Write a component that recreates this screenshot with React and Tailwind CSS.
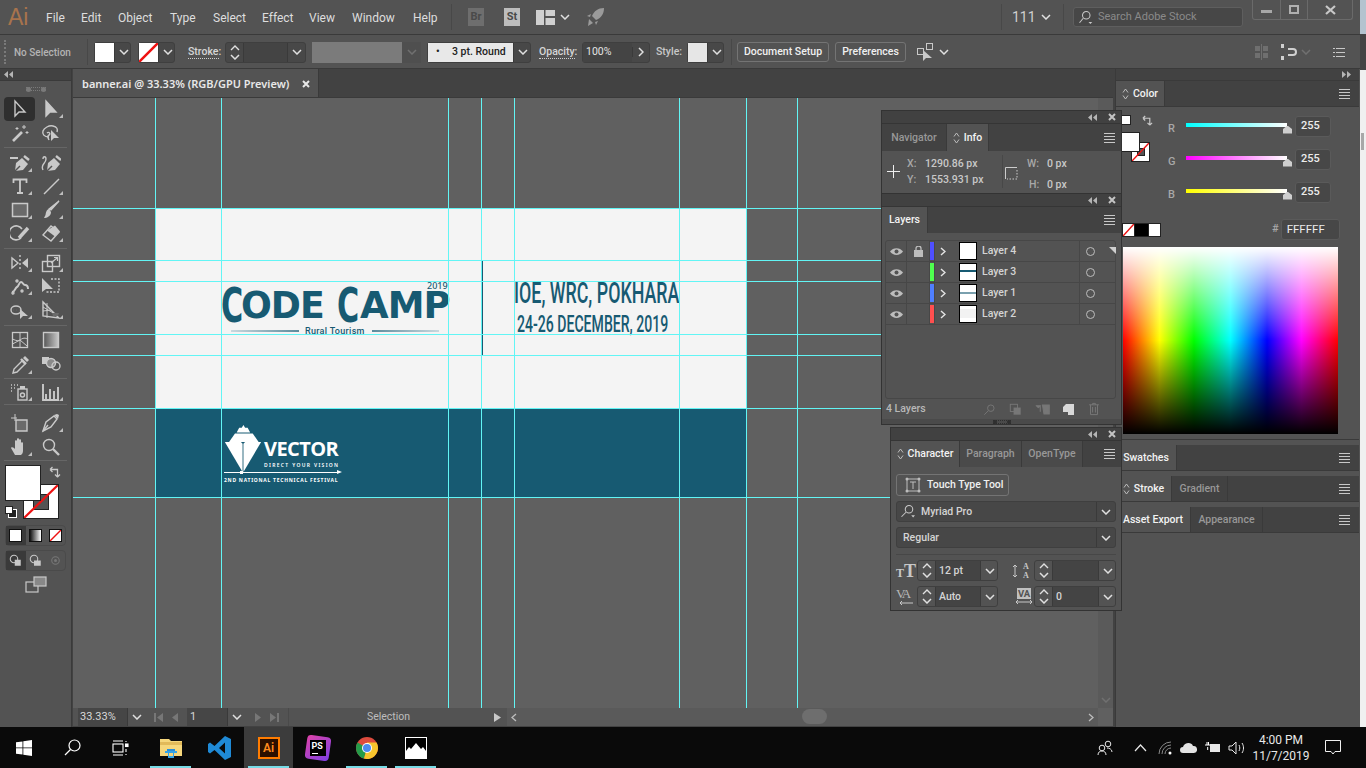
import React from 'react';

const ICON = '#c9c9c9';

const I = ({ children, size = 20, className = '' }) => (
    <svg width={size} height={size} viewBox="0 0 20 20" fill="none" stroke={ICON} strokeWidth="1.4" className={`shrink-0 ${className}`}>
        {children}
    </svg>
);

const Chev = ({ dim = false }) => (
    <svg width="10" height="6" viewBox="0 0 10 6" fill="none" stroke={dim ? '#707070' : '#e0e0e0'} strokeWidth="1.5"><path d="M1 1l4 4 4-4" /></svg>
);

const ChevBox = ({ w = 'w-[18px]', dim = false }) => (
    <div className={`${w} h-full shrink-0 flex items-center justify-center border-l border-[#3a3a3a]`}><Chev dim={dim} /></div>
);

const Spin = () => (
    <div className="w-[18px] h-full shrink-0 flex flex-col items-center justify-center gap-[3px] border-r border-[#3a3a3a]">
        <svg width="10" height="6" viewBox="0 0 10 6" fill="none" stroke="#e0e0e0" strokeWidth="1.4"><path d="M1 5l4-4 4 4" /></svg>
        <Chev />
    </div>
);

const Burger = () => (
    <div className="flex flex-col gap-[2px] w-[11px] shrink-0">
        <div className="h-px bg-[#c8c8c8]" /><div className="h-px bg-[#c8c8c8]" /><div className="h-px bg-[#c8c8c8]" /><div className="h-px bg-[#c8c8c8]" />
    </div>
);

const Updown = () => (
    <svg width="7" height="12" viewBox="0 0 7 12" fill="none" stroke="#bdbdbd" strokeWidth="1" className="shrink-0"><path d="M1 4.500L3.500 1 6 4.500M1 7.500L3.500 11 6 7.500" /></svg>
);

const Arrows2 = ({ right = false }) => (
    <svg width="9" height="7" viewBox="0 0 9 7" fill="#b5b5b5" className="shrink-0">
        {right ? <path d="M0 0l4 3.500L0 7zM5 0l4 3.500L5 7z" /> : <path d="M4 0L0 3.500 4 7zM9 0L5 3.500 9 7z" />}
    </svg>
);

const Close = () => (
    <svg width="8" height="8" viewBox="0 0 8 8" stroke="#c4c4c4" strokeWidth="2"><path d="M1 1l6 6M7 1L1 7" /></svg>
);

const Slash = ({ className = '' }) => (
    <svg viewBox="0 0 20 20" className={`block w-full h-full ${className}`} preserveAspectRatio="none"><rect width="20" height="20" fill="#fff" /><path d="M0 20L20 0" stroke="#ee1111" strokeWidth="2.6" /></svg>
);

const tools = {
    select: <path d="M5 2v15l4-4h6z" />,
    direct: <path d="M5 2v15l4-4h6z" fill={ICON} />,
    wand: <><path d="M3 18l9-9" strokeWidth="2.6" /><path d="M14 2v4M12 4h4M7 4v3M5.500 5.500h3M17 8v3M15.500 9.500h3" strokeWidth="1" /></>,
    lasso: <><path d="M8 14C3 14 1 11 2 8s6-6 10-5 5 3 4 6" /><path d="M6 10c2-2 4 1 2 2-2 1-1 3 0 5" /><path d="M10 7v11l3-3h5z" fill={ICON} stroke="none" /></>,
    pen: <><path d="M0 5h8" strokeWidth="2" /><path d="M5 18l1-8 6-5 6 6-5 6z" fill={ICON} stroke="none" /><path d="M14 3l5 4" strokeWidth="2.400" /><path d="M5 18l5-5" stroke="#535353" /></>,
    curve: <><path d="M2 17C-1 11 5 11 5 6c0-3-3-3-3 0" /><path d="M6 18l1-8 6-5 6 6-5 6z" fill={ICON} stroke="none" /><path d="M15 3l5 4" strokeWidth="2.400" /><path d="M6 18l5-5" stroke="#535353" /></>,
    type: <path d="M3.500 7V3.500h13V7M10 3.500V17M7 17h6" strokeWidth="1.800" />,
    line: <path d="M3 18L18 3" />,
    rect: <rect x="2.500" y="3.500" width="15" height="13" fill="#6a6a6a" strokeWidth="1.500" />,
    brush: <><path d="M18 1l-8 9-2-1z" fill={ICON} /><path d="M8 9c-3 1-3 4-3.500 6L3 18c3 0 7-2 7-6z" fill={ICON} stroke="none" /></>,
    shaper: <><path d="M11 15a7 7 0 1 1 1-9" strokeWidth="1.600" /><path d="M9 15L18 5" strokeWidth="3.400" /></>,
    eraser: <><path d="M2 12l8-9 8 6-8 9z" /><path d="M6 7.500l8-5 5 6-5 5z" fill={ICON} stroke="none" /></>,
    reflect: <><path d="M2 5v10l6-5z" /><path d="M10 2v16" strokeDasharray="2 2" /><path d="M18 5v10l-6-5z" fill={ICON} stroke="none" /></>,
    scale: <><rect x="1.500" y="8.500" width="10" height="10" /><rect x="6.500" y="2.500" width="12" height="11" /><path d="M10 10l6-5M13 4.500h3.500V8" strokeWidth="1.200" /></>,
    puppet: <><path d="M2 16c3 0 3-4 5-5s2-5 4-5 2 3 4 3 3 2 3 4" strokeWidth="2" /><circle cx="7" cy="5" r="1" /><circle cx="3" cy="17" r="1" /><circle cx="12" cy="15" r="1" /></>,
    free: <><path d="M1 2v14l4-3h7z" fill={ICON} stroke="none" /><path d="M10 3h8v13H5" strokeDasharray="2 1.500" /></>,
    builder: <><ellipse cx="6" cy="10" rx="5" ry="4" /><path d="M10 9v10l3-3h5z" fill={ICON} stroke="none" /><path d="M3 10h.1M6 10h.1M9 10h.1" /></>,
    persp: <><path d="M2 2v14l16 2-8-8z" /><path d="M2 7l12 7M2 11l8-1M6 3v15" strokeWidth="1" /><path d="M11 13h7l-1 3h-5z" fill="#6b6b6b" stroke="none" /></>,
    mesh: <><rect x="2.500" y="2.500" width="15" height="15" strokeWidth="1.300" /><path d="M10 2.500v15M2.500 9c4 2 6 2 7.500 1s4-3 7.500-1M2.500 14l7.500-4 7 6" strokeWidth="1" /></>,
    gradient: <><defs><linearGradient id="tg"><stop offset="0" stopColor="#555" /><stop offset="1" stopColor="#c8c8c8" /></linearGradient></defs><rect x="2.500" y="2.500" width="15" height="15" fill="url(#tg)" /></>,
    dropper: <><path d="M3 18l1-4 8-8 3 3-8 8z" /><path d="M11 4l5 5" strokeWidth="2.400" /><path d="M13 3l2-2 4 4-2 2z" fill={ICON} stroke="none" /></>,
    blend: <><rect x="1" y="2" width="7" height="7" fill={ICON} stroke="none" /><circle cx="10" cy="8" r="4.500" fill="#8a8a8a" stroke={ICON} /><circle cx="15" cy="11" r="4" /></>,
    spray: <><rect x="8" y="7" width="9" height="11" /><circle cx="12.500" cy="13" r="2" /><path d="M10 4h5v3h-5z" fill={ICON} stroke="none" /><path d="M1 3h1M4 3h1M7 3h1M1 6h1M4 6h1M1 9h1" strokeWidth="1.600" /></>,
    graph: <path d="M2 2v16h16M5 17v-5M9 17V7M13 17v-8M17 17V5" strokeWidth="1.900" />,
    artboard: <><path d="M1 5h6M5 1v7" strokeWidth="1" /><path d="M6 7h11v11H6z" fill="#6a6a6a" /></>,
    slice: <><path d="M2 18l3-9 8-6 3 3-6 8z" /><path d="M13 2l4 4 1-4-2-1z" fill={ICON} stroke="none" /><path d="M2 18l5-6" /></>,
    hand: <path d="M5 18L1 11c0-1 2-1 3 0l1 1V4c0-1 2-1 2 0v4-6c0-1 2-1 2 0v6-5c0-1 2-1 2 0v6-3c0-1 2-1 2 0v8c0 2-1 3-2 4z" fill={ICON} stroke="none" />,
    zoom: <><circle cx="8" cy="8" r="5.500" /><path d="M12 12l6 6" strokeWidth="2.400" /></>,
};

const Tool = ({ icon, corner = false, active = false }) => (
    <div className={`relative w-[31px] h-full flex items-center justify-center ${active ? 'bg-[#2f2f2f] rounded-sm' : ''}`}>
        <I>{tools[icon]}</I>
        {corner && <div className="absolute right-[3px] bottom-[3px] w-0 h-0 border-l-[4px] border-l-transparent border-b-[4px] border-b-[#bdbdbd]" />}
    </div>
);

const Row = ({ children, h }) => <div className={`${h} flex pl-[4px] shrink-0`}>{children}</div>;

const ToolBar = () => (
    <div className="w-[72px] shrink-0 flex flex-col border-r border-[#3a3a3a] bg-[#535353]">
        <div className="h-[12px] flex items-center pl-[4px] bg-[#424242] border-b border-[#3a3a3a] shrink-0"><Arrows2 /></div>
        <div className="h-[16px] flex items-center justify-center shrink-0"><div className="w-[20px] h-[4px] border-x-[5px] border-y border-dotted border-[#7a7a7a]" /></div>
        <Row h="h-[24px]"><Tool icon="select" active /><Tool icon="direct" corner /></Row>
        <Row h="h-[24px]"><Tool icon="wand" /><Tool icon="lasso" /></Row>
        <div className="h-[6px] pt-[2px] px-[4px] shrink-0"><div className="h-px bg-[#666]" /></div>
        <Row h="h-[23.5px]"><Tool icon="pen" corner /><Tool icon="curve" /></Row>
        <Row h="h-[23.5px]"><Tool icon="type" corner /><Tool icon="line" corner /></Row>
        <Row h="h-[23.5px]"><Tool icon="rect" corner /><Tool icon="brush" corner /></Row>
        <Row h="h-[23.5px]"><Tool icon="shaper" corner /><Tool icon="eraser" corner /></Row>
        <div className="h-[6px] pt-[3px] px-[4px] shrink-0"><div className="h-px bg-[#666]" /></div>
        <Row h="h-[23.5px]"><Tool icon="reflect" corner /><Tool icon="scale" corner /></Row>
        <Row h="h-[23.5px]"><Tool icon="puppet" corner /><Tool icon="free" /></Row>
        <Row h="h-[23.5px]"><Tool icon="builder" corner /><Tool icon="persp" corner /></Row>
        <div className="h-[6px] pt-[3px] px-[4px] shrink-0"><div className="h-px bg-[#666]" /></div>
        <Row h="h-[24.5px]"><Tool icon="mesh" /><Tool icon="gradient" /></Row>
        <Row h="h-[25px]"><Tool icon="dropper" corner /><Tool icon="blend" /></Row>
        <div className="h-[3px] pt-px px-[4px] shrink-0"><div className="h-px bg-[#666]" /></div>
        <Row h="h-[24px]"><Tool icon="spray" corner /><Tool icon="graph" corner /></Row>
        <div className="h-[6px] px-[4px] shrink-0"><div className="h-px bg-[#666]" /></div>
        <Row h="h-[25px]"><Tool icon="artboard" /><Tool icon="slice" corner /></Row>
        <Row h="h-[24px]"><Tool icon="hand" corner /><Tool icon="zoom" /></Row>
        <div className="h-[6px] pt-px px-[4px] shrink-0"><div className="h-px bg-[#666]" /></div>

        <div className="relative h-[54px] shrink-0">
            <div className="absolute left-[23px] top-[19px] w-[36px] h-[35px] bg-white border border-[#222]">
                <div className="absolute left-[9px] top-[9px] w-[16px] h-[16px] bg-[#535353] border border-[#222]" />
                <svg viewBox="0 0 20 20" className="absolute inset-0 w-full h-full" preserveAspectRatio="none"><path d="M0 20L20 0" stroke="#ee1111" strokeWidth="1.300" /></svg>
            </div>
            <div className="absolute left-[5px] top-0 w-[36px] h-[36px] bg-white border border-[#222]" />
            <div className="absolute left-[49px] top-[1px]">
                <svg width="12" height="13" viewBox="0 0 12 13" fill="none" stroke={ICON} strokeWidth="1.300"><path d="M1 3.500h7.500V11M1 3.500L3.500 1M1 3.500L3.500 6M8.500 11L6 8.500M8.500 11L11 8.500" /></svg>
            </div>
            <div className="absolute left-[5px] top-[41px] w-[12px] h-[12px]">
                <div className="absolute left-[3px] top-[3px] w-[9px] h-[9px] bg-[#222] border border-white" />
                <div className="absolute left-0 top-0 w-[8px] h-[8px] bg-white border border-[#222]" />
            </div>
        </div>
        <div className="h-[21px] mt-[6px] mx-[5px] flex border border-[#4a4a4a] rounded-sm shrink-0">
            <div className="flex-1 flex items-center justify-center bg-[#3a3a3a]"><div className="w-[13px] h-[13px] bg-white border border-[#111]" /></div>
            <div className="flex-1 flex items-center justify-center"><div className="w-[13px] h-[13px] bg-[linear-gradient(to_right,#111,#fff)] border border-[#111]" /></div>
            <div className="flex-1 flex items-center justify-center"><div className="w-[13px] h-[13px] border border-[#111]"><Slash /></div></div>
        </div>
        <div className="h-[21px] mt-[4px] mx-[5px] flex border border-[#4a4a4a] rounded-sm shrink-0">
            <div className="flex-1 flex items-center justify-center bg-[#3a3a3a]"><I size={15}><circle cx="8" cy="8" r="5" /><rect x="9" y="9" width="8" height="8" fill={ICON} stroke="none" /></I></div>
            <div className="flex-1 flex items-center justify-center"><I size={15}><circle cx="8" cy="8" r="5" /><rect x="8" y="10" width="9" height="7" fill={ICON} stroke="none" /></I></div>
            <div className="flex-1 flex items-center justify-center"><I size={15}><circle cx="10" cy="10" r="5" stroke="#777" /><circle cx="10" cy="10" r="2" fill="#777" stroke="none" /></I></div>
        </div>
        <div className="flex justify-center mt-[5px] shrink-0">
            <svg width="22" height="17" viewBox="0 0 22 17" fill="none" stroke={ICON} strokeWidth="1.200"><rect x="1" y="6" width="12" height="10" /><rect x="9" y="1" width="12" height="9" fill="#888" /></svg>
        </div>
    </div>
);

const MENU = [['File', 'w-[35px]'], ['Edit', 'w-[37px]'], ['Object', 'w-[52px]'], ['Type', 'w-[43px]'], ['Select', 'w-[49px]'], ['Effect', 'w-[47px]'], ['View', 'w-[43px]'], ['Window', 'w-[61px]'], ['Help', 'w-[38px]']];

const MenuBar = () => (
    <div className="h-[35px] shrink-0 flex items-center bg-[#535353] border-b border-[#3a3a3a] text-[12px] text-[#dedede]">
        <div className="w-[46px] shrink-0 pl-[8px] text-[23px] leading-none text-[#a8734d] font-['Liberation_Sans',sans-serif]">Ai</div>
        {MENU.map(([m, w]) => <div key={m} className={`${w} shrink-0 pt-[2px]`}>{m}</div>)}
        <div className="w-px h-[26px] bg-[#484848] shrink-0" />
        <div className="ml-[16px] w-[16px] h-[18px] bg-[#6e6e6e] text-[#4a4a4a] text-[11px] font-bold flex items-center justify-center shrink-0">Br</div>
        <div className="ml-[20px] w-[16px] h-[18px] bg-[#bdbdbd] text-[#4a4a4a] text-[11px] font-bold flex items-center justify-center shrink-0">St</div>
        <svg width="19" height="15" viewBox="0 0 19 15" fill="#d0d0d0" className="ml-[16px] shrink-0"><path d="M0 0h8v15H0zM9.500 0H19v6H9.500zM9.500 8H19v7H9.500z" /></svg>
        <div className="ml-[5px] shrink-0"><Chev /></div>
        <svg width="18" height="18" viewBox="0 0 18 18" fill="#9a9a9a" className="ml-[16px] shrink-0"><path d="M18 0c-6 0-10 3-12 8l4 4c5-2 8-6 8-12zM1 8l4-2-1 3zM10 17l2-4-3 1zM3 11l4 4-5 3z" /></svg>
        <div className="flex-1" />
        <div className="w-px h-[26px] bg-[#484848] shrink-0" />
        <div className="ml-[10px] w-[20px] text-[14px] text-[#cfcfcf] shrink-0">111</div>
        <div className="ml-[9px] shrink-0"><Chev /></div>
        <div className="ml-[12px] w-px h-[26px] bg-[#484848] shrink-0" />
        <div className="ml-[9px] w-[170px] h-[20px] bg-[#474747] border border-[#5e5e5e] rounded-[3px] flex items-center pl-[4px] gap-[5px] text-[11px] text-[#8a8a8a] shrink-0">
            <I size={15}><circle cx="11" cy="7" r="5" /><path d="M7 11l-5 6" /><path d="M14 16h5l-2.500 2.500z" fill={ICON} stroke="none" /></I>
            <span>Search Adobe Stock</span>
        </div>
        <div className="ml-[9px] w-[101px] h-[20px] -mt-[14px] flex border border-t-0 border-[#6a6a6a] rounded-b-[3px] shrink-0">
            <div className="w-[28px] flex items-center justify-center border-r border-[#6a6a6a]"><div className="w-[11px] h-[3px] mt-[3px] bg-[#a8a8a8]" /></div>
            <div className="w-[27px] flex items-center justify-center border-r border-[#6a6a6a]"><div className="w-[10px] h-[9px] border-2 border-[#b0b0b0]" /></div>
            <div className="flex-1 flex items-center justify-center"><svg width="11" height="10" viewBox="0 0 11 10" stroke="#c8c8c8" strokeWidth="2.200"><path d="M1 1l9 8M10 1L1 9" /></svg></div>
        </div>
        <div className="w-[7px] shrink-0" />
    </div>
);

const Box = ({ w = '', light = false, children }) => (
    <div className={`${w} h-[21px] flex items-center border border-[#3f3f3f] rounded-[3px] shrink-0 ${light ? 'bg-[#e8e8e8]' : 'bg-[#484848]'}`}>{children}</div>
);

const Field = ({ w, children }) => <div className={`${w} h-full bg-[#444] flex items-center px-[3px] shrink-0`}>{children}</div>;

const Label = ({ children, className = '' }) => (
    <div className={`shrink-0 text-[10.500px] font-medium text-[#d6d6d6] border-b border-dotted border-[#cfcfcf] leading-[13px] ${className}`}>{children}</div>
);

const Swatch = ({ children, className = '' }) => (
    <div className={`w-[19px] h-[19px] shrink-0 ${className}`}>{children}</div>
);

const ControlBar = () => (
    <div className="h-[34px] shrink-0 flex items-center pt-[1px] bg-[#535353] border-b border-[#3a3a3a] text-[10.500px] text-[#dedede] whitespace-nowrap">
        <div className="ml-[4px] w-[2px] h-[24px] border-l-2 border-dotted border-[#7a7a7a] shrink-0" />
        <div className="ml-[8px] w-[73px] text-[10px] font-medium text-[#b4b4b4] shrink-0">No Selection</div>
        <div className="w-px h-[26px] bg-[#484848] shrink-0" />
        <div className="ml-[6px] w-[37px] h-[21px] flex items-center border border-[#3f3f3f] rounded-[3px] bg-[#484848] shrink-0"><Swatch className="bg-white" /><ChevBox /></div>
        <div className="ml-[7px] w-[37px] h-[21px] flex items-center border border-[#3f3f3f] rounded-[3px] bg-[#484848] shrink-0"><Swatch><Slash /></Swatch><ChevBox /></div>
        <Label className="ml-[13px] w-[31px]">Stroke:</Label>
        <div className="ml-[6px]"><Box w="w-[81px]"><Spin /><Field w="w-[43px]" /><ChevBox /></Box></div>
        <div className="ml-[6px] w-[90px] h-[21px] bg-[#7b7b7b] shrink-0" />
        <div className="w-[19px] h-[21px] flex items-center justify-center bg-[#4f4f4f] shrink-0"><Chev dim /></div>
        <div className="ml-[6px]">
            <Box w="w-[104px]">
                <div className="w-[85px] h-full bg-[#e8e8e8] flex items-center text-[#222] text-[10.500px] font-medium shrink-0"><span className="ml-[8px] w-[16px]">•</span><span>3 pt. Round</span></div>
                <ChevBox />
            </Box>
        </div>
        <Label className="ml-[8px] w-[36px]">Opacity:</Label>
        <div className="ml-[7px]"><Box w="w-[68px]"><Field w="w-[49px]"><span className="text-[10.500px] text-[#e4e4e4]">100%</span></Field><div className="w-[18px] flex justify-center border-l border-[#3a3a3a]"><svg width="6" height="10" viewBox="0 0 6 10" fill="none" stroke="#e0e0e0" strokeWidth="1.500"><path d="M1 1l4 4-4 4" /></svg></div></Box></div>
        <div className="ml-[6px] w-[24px] font-medium text-[#c8c8c8] shrink-0">Style:</div>
        <div className="ml-[7px] w-[37px] h-[21px] flex items-center border border-[#3f3f3f] rounded-[3px] bg-[#484848] shrink-0"><Swatch className="bg-[#e6e6e6]" /><ChevBox /></div>
        <div className="ml-[7px] w-px h-[26px] bg-[#484848] shrink-0" />
        <div className="ml-[5px] w-[92px] h-[20px] flex items-center justify-center border border-[#747474] rounded-[3px] font-medium text-[10.500px] text-[#f0f0f0] shrink-0">Document Setup</div>
        <div className="ml-[6px] w-[71px] h-[20px] flex items-center justify-center border border-[#747474] rounded-[3px] font-medium text-[10.500px] text-[#f0f0f0] shrink-0">Preferences</div>
        <svg width="20" height="20" viewBox="0 0 20 20" fill="none" stroke={ICON} className="ml-[10px] shrink-0"><rect x="1.500" y="6.500" width="6" height="6" /><rect x="10.500" y="1.500" width="6" height="6" /><path d="M7 8v11l3-3h6z" fill={ICON} stroke="none" /></svg>
        <div className="ml-[3px] shrink-0"><Chev /></div>
        <div className="flex-1" />
        <svg width="15" height="16" viewBox="0 0 15 16" fill="#6f6f6f" className="shrink-0"><path d="M1 2h5v5H1zM9 2h5v5H9zM1 9h5v5H1zM9 9h5v5H9z" /><path d="M7.500 0v16" stroke="#6f6f6f" /></svg>
        <svg width="18" height="18" viewBox="0 0 18 18" className="ml-[11px] shrink-0"><path d="M1 1h3v4H1zM1 13h3v4H1z" fill="#d0d0d0" /><path d="M8 6h5a3 3 0 0 1 0 6H8" stroke="#d0d0d0" strokeWidth="2" fill="none" /></svg>
        <div className="ml-[3px] shrink-0"><Chev dim /></div>
        <div className="ml-[22px] w-[12px] shrink-0">
            <svg width="12" height="11" viewBox="0 0 12 11" stroke="#c8c8c8"><path d="M3 1.500h9M3 5.500h9M3 9.500h9M0 1.500h2M0 5.500h2M0 9.500h2" /></svg>
        </div>
        <div className="w-[15px] shrink-0" />
    </div>
);

const VGUIDES = ['left-[82px]', 'left-[148px]', 'left-[375px]', 'left-[408px]', 'left-[441px]', 'left-[606px]', 'left-[673px]', 'left-[724px]'];
const HGUIDES = ['top-[110px]', 'top-[162px]', 'top-[183px]', 'top-[236px]', 'top-[257px]', 'top-[310px]', 'top-[399px]'];

const Artboard = () => (
    <div className="absolute left-[82px] top-[110px] w-[591px] text-[#175a72]">
        <div className="relative h-[200px] bg-[#f4f4f4] overflow-hidden">
            <span className="absolute left-[66px] top-[79px] text-[48px] leading-[36px] font-bold font-['DejaVu_Sans',sans-serif] origin-left scale-x-[0.63]">C</span>
            <span className="absolute left-[86px] top-[83px] text-[37px] leading-[30px] font-bold font-['DejaVu_Sans',sans-serif] tracking-[-1px] origin-left scale-x-[0.98] whitespace-nowrap">ODE</span>
            <span className="absolute left-[182px] top-[79px] text-[48px] leading-[36px] font-bold font-['DejaVu_Sans',sans-serif] origin-left scale-x-[0.63]">C</span>
            <span className="absolute left-[205px] top-[83px] text-[37px] leading-[30px] font-bold font-['DejaVu_Sans',sans-serif] tracking-[-1px] origin-left whitespace-nowrap">AMP</span>
            <span className="absolute left-[272px] top-[73px] text-[9px] leading-[10px] font-medium font-['Noto_Sans',sans-serif]">2019</span>
            <div className="absolute left-[76px] top-[122px] w-[68px] h-[2px] bg-[linear-gradient(to_right,#c9d8de,#5b8a9b)]" />
            <div className="absolute left-[217px] top-[122px] w-[67px] h-[2px] bg-[linear-gradient(to_right,#5b8a9b,#c9d8de)]" />
            <div className="absolute left-[150px] top-[118px] h-[8px] overflow-hidden text-[9px] leading-[11px] font-medium tracking-[0.3px] whitespace-nowrap">Rural Tourism</div>
            <span className="absolute left-[359px] top-[67px] text-[30px] leading-[36px] font-medium origin-left scale-x-[0.594] whitespace-nowrap">IOE, WRC, POKHARA</span>
            <span className="absolute left-[362px] top-[103px] text-[23px] leading-[28px] font-medium origin-left scale-x-[0.612] whitespace-nowrap">24-26 DECEMBER, 2019</span>
            <div className="absolute left-[327px] top-[53px] w-px h-[94px] bg-[#175a72]" />
        </div>
        <div className="relative h-[89px] bg-[#175a72] text-white overflow-hidden font-['Noto_Sans',sans-serif]">
            <svg width="38" height="47" viewBox="0 0 45 50" preserveAspectRatio="none" fill="#fff" className="absolute left-[69px] top-[17px]">
                <path d="M18 3h3l2-3 2 3h3l3 5H15z" />
                <path d="M13 9h21l7 9H6z" />
                <path d="M1 18h19l2 2v30z" />
                <path d="M44 18H25l-2 2v30z" />
            </svg>
            <span className="absolute left-[109px] top-[29px] text-[20px] leading-[24px] font-bold tracking-[-0.6px] font-['Open_Sans',sans-serif]">VECTOR</span>
            <span className="absolute left-[109px] top-[54px] text-[5px] leading-[6px] font-semibold tracking-[1.330px] whitespace-nowrap">DIRECT YOUR VISION</span>
            <div className="absolute left-[69px] top-[64px] w-[115px] h-px bg-white" />
            <div className="absolute left-[85px] top-[63px] w-[3px] h-[3px] bg-white" />
            <div className="absolute left-[182px] top-[62px] w-0 h-0 border-y-[2.500px] border-y-transparent border-l-[5px] border-l-white" />
            <span className="absolute left-[69px] top-[69px] text-[5px] leading-[6px] font-bold tracking-[0.740px] whitespace-nowrap">2ND NATIONAL TECHNICAL FESTIVAL</span>
        </div>
    </div>
);

const Canvas = () => (
    <div className="relative flex-1 bg-[#606060] overflow-hidden">
        <Artboard />
        {VGUIDES.map((g) => <div key={g} className={`absolute top-0 bottom-0 w-px bg-[#62f5f5] ${g}`} />)}
        {HGUIDES.map((g) => <div key={g} className={`absolute left-0 right-0 h-px bg-[#62f5f5] ${g}`} />)}
    </div>
);

const StatusBar = () => (
    <div className="h-[18px] shrink-0 flex items-center bg-[#535353] text-[11px] text-[#d8d8d8]">
        <div className="ml-[5px] w-[49px] h-full bg-[#464646] flex items-center pl-[2px] shrink-0">33.33%</div>
        <ChevBox />
        <div className="w-[42px] h-full flex items-center justify-center gap-[9px] shrink-0">
            <svg width="9" height="9" viewBox="0 0 9 9" fill="#777"><path d="M0 0h2v9H0zM9 0L3 4.500 9 9z" /></svg>
            <svg width="6" height="9" viewBox="0 0 6 9" fill="#777"><path d="M6 0L0 4.500 6 9z" /></svg>
        </div>
        <div className="w-[40px] h-full bg-[#464646] flex items-center pl-[3px] shrink-0">1</div>
        <ChevBox />
        <div className="w-[43px] h-full flex items-center justify-center gap-[9px] shrink-0">
            <svg width="6" height="9" viewBox="0 0 6 9" fill="#777"><path d="M0 0l6 4.500L0 9z" /></svg>
            <svg width="9" height="9" viewBox="0 0 9 9" fill="#777"><path d="M0 0l6 4.500L0 9zM7 0h2v9H7z" /></svg>
        </div>
        <div className="w-[200px] h-full flex items-center justify-center border-l border-[#4a4a4a] text-[10.500px] text-[#bdbdbd] shrink-0">Selection</div>
        <div className="w-[19px] flex justify-center shrink-0"><svg width="7" height="9" viewBox="0 0 7 9" fill="#c8c8c8"><path d="M0 0l7 4.500L0 9z" /></svg></div>
        <div className="relative flex-1 h-full flex items-center justify-between px-[4px] bg-[#5a5a5a]">
            <svg width="6" height="9" viewBox="0 0 6 9" fill="none" stroke="#bdbdbd" strokeWidth="1.300"><path d="M5 1L1 4.500 5 8" /></svg>
            <svg width="6" height="9" viewBox="0 0 6 9" fill="none" stroke="#bdbdbd" strokeWidth="1.300"><path d="M1 1l4 3.500L1 8" /></svg>
            <div className="absolute left-[295px] top-[1px] w-[25px] h-[15px] rounded-full bg-[#6e6e6e]" />
        </div>
        <div className="w-[15px] h-full bg-[#606060] shrink-0" />
    </div>
);

const TabHead = ({ active, children, w, dim = false }) => (
    <div className={`${w} h-full shrink-0 flex items-center justify-center gap-[4px] text-[10.500px] font-medium whitespace-nowrap border-r border-[#3a3a3a] ${active ? 'bg-[#535353] text-[#f2f2f2]' : 'text-[#989898]'} ${dim ? 'bg-[#4a4a4a]' : ''}`}>{children}</div>
);

const PanelTop = () => (
    <div className="h-[13px] shrink-0 flex items-center justify-end gap-[11px] pr-[5px] bg-[#414141] border-b border-[#353535]"><Arrows2 /><Close /></div>
);

const Eye = () => (
    <svg width="13" height="9" viewBox="0 0 13 9"><path d="M0 4.500C3 0 10 0 13 4.500 10 9 3 9 0 4.500z" fill="#bdbdbd" /><circle cx="6.500" cy="4.500" r="2" fill="#535353" /></svg>
);

const LAYERS = [
    { name: 'Layer 4', bar: 'bg-[#4f4fff]', lock: true, mark: null },
    { name: 'Layer 3', bar: 'bg-[#4fff4f]', mark: <div className="mt-[6px] h-[2px] bg-[#175a72]" /> },
    { name: 'Layer 1', bar: 'bg-[#4f7fff]', mark: <div className="mt-[7px] h-[2px] bg-[#7aa0ae]" /> },
    { name: 'Layer 2', bar: 'bg-[#ff4f4f]', mark: <div className="mt-[3px] h-[9px] bg-[#f2f2f2]" /> },
];

const FloatingPanels = () => (
    <>
        <div className="absolute left-[881px] top-[41px] w-[241px] h-[84px] flex flex-col bg-[#535353] border border-[#333] text-[#c8c8c8]">
            <PanelTop />
            <div className="h-[27px] shrink-0 flex items-stretch bg-[#424242] pr-[6px]">
                <TabHead w="w-[65px]">Navigator</TabHead>
                <TabHead w="w-[42px]" active><Updown />Info</TabHead>
                <div className="flex-1 flex items-center justify-end"><Burger /></div>
            </div>
            <div className="relative flex-1 text-[10.500px] font-medium">
                <div className="absolute left-[5px] top-[14px]"><svg width="13" height="13" viewBox="0 0 13 13" stroke="#eee"><path d="M6.500 0v13M0 6.500h13" /></svg></div>
                <span className="absolute left-[25px] top-[5px] text-[#a8a8a8]">X:</span>
                <span className="absolute left-[43px] top-[5px]">1290.86 px</span>
                <span className="absolute left-[25px] top-[21px] text-[#a8a8a8]">Y:</span>
                <span className="absolute left-[43px] top-[21px]">1553.931 px</span>
                <div className="absolute left-[120px] top-[4px] w-px h-[33px] bg-[#484848]" />
                <div className="absolute left-[122px] top-[15px]"><svg width="14" height="14" viewBox="0 0 14 14" fill="none" stroke="#ccc"><path d="M1.500 13V1.500H13" /><path d="M13 4v9H3" strokeDasharray="1.500 1.500" /></svg></div>
                <span className="absolute left-[145px] top-[5px] text-[#a8a8a8]">W:</span>
                <span className="absolute left-[165px] top-[5px]">0 px</span>
                <span className="absolute left-[147px] top-[26px] text-[#a8a8a8]">H:</span>
                <span className="absolute left-[165px] top-[26px]">0 px</span>
            </div>
        </div>

        <div className="absolute left-[881px] top-[124px] w-[241px] h-[232px] flex flex-col bg-[#535353] border border-[#333]">
            <PanelTop />
            <div className="h-[26px] shrink-0 flex items-stretch bg-[#424242] pr-[6px]">
                <TabHead w="w-[46px]" active>Layers</TabHead>
                <div className="flex-1 flex items-center justify-end"><Burger /></div>
            </div>
            <div className="ml-[3px] mr-[5px] mt-[7px] h-[159px] border border-[#474747] rounded-[3px] shrink-0">
                {LAYERS.map((l) => (
                    <div key={l.name} className="relative h-[21px] flex items-center border-b border-[#474747] text-[10.500px] font-medium text-[#d4d4d4]">
                        <div className="w-[21px] h-full flex items-center justify-center border-r border-[#474747] shrink-0"><Eye /></div>
                        <div className="w-[22px] h-full flex items-center justify-center shrink-0">
                            {l.lock && <svg width="9" height="11" viewBox="0 0 9 11"><rect y="4" width="9" height="7" fill="#bdbdbd" /><path d="M2 4V2.500a2.500 2.500 0 0 1 5 0V4" fill="none" stroke="#bdbdbd" strokeWidth="1.300" /></svg>}
                        </div>
                        <div className="w-[6px] h-full flex items-center shrink-0 border-x border-[#474747]"><div className={`w-[4px] h-[18px] ${l.bar}`} /></div>
                        <div className="w-[24px] pl-[5px] shrink-0"><svg width="6" height="9" viewBox="0 0 6 9" fill="none" stroke="#e4e4e4" strokeWidth="1.500"><path d="M1 1l4 3.500L1 8" /></svg></div>
                        <div className="w-[18px] h-[18px] bg-white border border-black shrink-0">{l.mark}</div>
                        <span className="ml-[5px] w-[97px] shrink-0">{l.name}</span>
                        <div className="w-px h-full bg-[#474747] shrink-0" />
                        <div className="ml-[6px] w-[9px] h-[9px] rounded-full border border-[#bdbdbd] shrink-0" />
                    </div>
                ))}
            </div>
            <div className="relative h-[20px] shrink-0 flex items-center pl-[4px] gap-[13px] text-[10.500px] text-[#b8b8b8] font-medium">
                <span className="w-[80px] shrink-0">4 Layers</span>
                <I size={13} className="ml-[4px]"><circle cx="12" cy="8" r="5" stroke="#777" /><path d="M8 12l-6 6" stroke="#777" /></I>
                <I size={13}><rect x="2" y="2" width="11" height="11" stroke="#777" /><rect x="7" y="7" width="11" height="11" fill="#777" stroke="none" /></I>
                <I size={15}><path d="M1 5h6l-3 3M7 5v8M10 4h9v12h-7z" fill="#777" stroke="#777" /></I>
                <svg width="11" height="11" viewBox="0 0 11 11" fill="#d8d8d8"><path d="M3 0h8v11H5V8H0V3z" /></svg>
                <I size={14}><path d="M3 4h14M8 4V2h4v2M5 4v14h10V4M8 7v8M12 7v8" stroke="#777" /></I>
            </div>
            <div className="flex-1 flex items-center justify-center bg-[#4a4a4a]"><div className="w-[18px] h-[4px] border-x-[4px] border-y border-dotted border-[#2f2f2f]" /></div>
            <div className="absolute right-[5px] top-[53px] w-0 h-0 border-l-[7px] border-l-transparent border-t-[7px] border-t-[#cfcfcf]" />
        </div>

        <div className="absolute left-[890px] top-[358px] w-[232px] h-[184px] flex flex-col bg-[#535353] border border-[#333] text-[#d4d4d4]">
            <PanelTop />
            <div className="h-[26px] shrink-0 flex items-stretch bg-[#424242] pr-[6px]">
                <TabHead w="w-[69px]" active><Updown />Character</TabHead>
                <TabHead w="w-[62px]" dim>Paragraph</TabHead>
                <TabHead w="w-[61px]" dim>OpenType</TabHead>
                <div className="flex-1 flex items-center justify-end"><Burger /></div>
            </div>
            <div className="flex-1 flex flex-col px-[5px] pt-[7px] text-[10.500px] font-medium">
                <div className="w-[113px] h-[22px] flex items-center border border-[#747474] rounded-[3px] pl-[8px] gap-[6px] whitespace-nowrap shrink-0">
                    <svg width="16" height="16" viewBox="0 0 16 16" fill="#bdbdbd" className="shrink-0"><rect x="2" y="2" width="12" height="12" fill="none" stroke="#bdbdbd" /><circle cx="2" cy="2" r="1.500" /><circle cx="14" cy="2" r="1.500" /><circle cx="2" cy="14" r="1.500" /><circle cx="14" cy="14" r="1.500" /><path d="M5 5h6M8 5v7" fill="none" stroke="#bdbdbd" /></svg>
                    <span className="text-[#f0f0f0]">Touch Type Tool</span>
                </div>
                <div className="mt-[5px] h-[21px] w-[220px] flex items-center bg-[#474747] border border-[#3f3f3f] rounded-[3px] shrink-0">
                    <div className="ml-[3px] mr-[6px]"><I size={15}><circle cx="12" cy="7" r="5" /><path d="M8 11l-6 6" /><path d="M15 15h5l-2.500 3z" fill={ICON} stroke="none" /></I></div>
                    <span className="flex-1">Myriad Pro</span>
                    <ChevBox w="w-[19px]" />
                </div>
                <div className="mt-[5px] h-[21px] w-[220px] flex items-center bg-[#474747] border border-[#3f3f3f] rounded-[3px] shrink-0">
                    <span className="flex-1 pl-[6px]">Regular</span>
                    <ChevBox w="w-[19px]" />
                </div>
                <div className="mt-[6px] w-[220px] h-px bg-[#474747] shrink-0" />
                <div className="mt-[5px] h-[21px] flex items-center shrink-0">
                    <div className="w-[21px] leading-none text-[#c8c8c8] font-['Liberation_Serif',serif] font-bold shrink-0"><span className="text-[12px]">T</span><span className="text-[18px]">T</span></div>
                    <div className="w-[81px] h-full flex items-center border border-[#3f3f3f] rounded-[3px] shrink-0"><Spin /><Field w="w-[44px]"><span>12 pt</span></Field><ChevBox /></div>
                    <svg width="6" height="14" viewBox="0 0 6 14" fill="none" stroke="#c8c8c8" className="ml-[14px] shrink-0"><path d="M3 1v12M1 3l2-2 2 2M1 11l2 2 2-2" /></svg>
                    <div className="w-[16px] mr-[0px] flex flex-col items-center text-[8px] leading-[9px] text-[#c8c8c8] font-['Liberation_Serif',serif] font-bold shrink-0"><span>A</span><span>A</span></div>
                    <div className="w-[82px] h-full flex items-center border border-[#3f3f3f] rounded-[3px] shrink-0"><Spin /><Field w="w-[45px]" /><ChevBox /></div>
                </div>
                <div className="mt-[5px] h-[21px] flex items-center shrink-0">
                    <div className="w-[21px] flex flex-col items-start shrink-0">
                        <span className="leading-[12px] text-[#b8b8b8] text-[13px] tracking-[-2px] font-['Liberation_Serif',serif]">VA</span>
                        <svg width="14" height="6" viewBox="0 0 14 6" fill="none" stroke="#c8c8c8" className="ml-[3px]"><path d="M14 3H1M3 1L1 3l2 2" /></svg>
                    </div>
                    <div className="w-[81px] h-full flex items-center border border-[#3f3f3f] rounded-[3px] shrink-0"><Spin /><Field w="w-[44px]"><span>Auto</span></Field><ChevBox /></div>
                    <div className="ml-[16px] w-[20px] flex flex-col items-center shrink-0">
                        <span className="px-[1px] bg-[#c0c0c0] text-[#535353] text-[9.500px] leading-[11px] font-bold">VA</span>
                        <svg width="18" height="6" viewBox="0 0 18 6" fill="none" stroke="#c8c8c8"><path d="M1 3h16M3 1L1 3l2 2M15 1l2 2-2 2" /></svg>
                    </div>
                    <div className="w-[82px] h-full flex items-center border border-[#3f3f3f] rounded-[3px] shrink-0"><Spin /><Field w="w-[45px]"><span>0</span></Field><ChevBox /></div>
                </div>
            </div>
        </div>
    </>
);

const DockTab = ({ tabs }) => (
    <div className="h-[26px] shrink-0 flex items-stretch bg-[#424242] border-b border-[#3a3a3a] pr-[9px]">
        {tabs}
        <div className="flex-1 flex items-center justify-end"><Burger /></div>
    </div>
);

const SLIDERS = [
    ['R', 'bg-[linear-gradient(to_right,#00ffff,#fff)]'],
    ['G', 'bg-[linear-gradient(to_right,#ff00ff,#fff)]'],
    ['B', 'bg-[linear-gradient(to_right,#ffff00,#fff)]'],
];

const Dock = () => (
    <div className="w-[244px] flex flex-col shrink-0 border-l border-[#3a3a3a] bg-[#535353]">
        <div className="h-[12px] shrink-0 flex items-center justify-end pr-[8px] bg-[#424242] border-b border-[#3a3a3a]"><Arrows2 right /></div>
        <DockTab tabs={<TabHead w="w-[49px]" active><Updown />Color</TabHead>} />
        <div className="relative h-[333px] shrink-0 border-b border-[#3a3a3a]">
            <div className="absolute left-[15px] top-[35px] w-[19px] h-[20px] bg-white border border-[#222]"><div className="absolute left-[5px] top-[5px] w-[8px] h-[8px] bg-[#535353] border border-[#222]" /><svg viewBox="0 0 20 20" className="absolute inset-0 w-full h-full" preserveAspectRatio="none"><path d="M0 20L20 0" stroke="#ee1111" strokeWidth="1.600" /></svg></div>
            <div className="absolute left-[5px] top-[25px] w-[19px] h-[20px] bg-white border border-[#222]" />
            <div className="absolute left-[5px] top-[8px] w-[10px] h-[10px] bg-white border border-[#222]" />
            <div className="absolute left-[26px] top-[8px]"><svg width="11" height="12" viewBox="0 0 12 13" fill="none" stroke={ICON} strokeWidth="1.300"><path d="M1 3.500h7.500V11M1 3.500L3.500 1M1 3.500L3.500 6M8.500 11L6 8.500M8.500 11L11 8.500" /></svg></div>
            <div className="ml-[52px] pt-[9px] flex flex-col gap-[12px]">
                {SLIDERS.map(([k, g]) => (
                    <div key={k} className="h-[21px] flex items-center text-[11px] font-medium text-[#a8a8a8]">
                        <span className="w-[18px] shrink-0 mt-[5px]">{k}</span>
                        <div className={`relative w-[101px] h-[4px] -mt-[4px] shrink-0 ${g}`}>
                            <div className="absolute right-[-5px] top-[3px] w-[9px] h-[8px] bg-[#cfcfcf] [clip-path:polygon(50%_0,100%_45%,100%_100%,0_100%,0_45%)]" />
                        </div>
                        <div className="ml-[8px] w-[36px] h-[21px] flex items-center pl-[5px] bg-[#474747] border border-[#5a5a5a] rounded-[3px] text-[#ececec] text-[11px]">255</div>
                    </div>
                ))}
            </div>
            <div className="absolute left-0 top-[112px] w-[338px] flex items-center">
                <div className="ml-[6px] w-[13px] h-[14px] border border-[#222]"><Slash /></div>
                <div className="w-[13px] h-[14px] bg-black border-y border-[#222]" />
                <div className="w-[13px] h-[14px] bg-white border border-[#222]" />
                <span className="ml-[111px] text-[11px] font-medium text-[#a8a8a8]">#</span>
                <div className="ml-[2px] w-[59px] h-[21px] flex items-center pl-[5px] bg-[#474747] border border-[#5a5a5a] rounded-[3px] text-[#ececec] text-[11.500px]">FFFFFF</div>
            </div>
            <div className="absolute left-[7px] top-[140px] w-[215px] h-[187px] bg-[linear-gradient(to_bottom,#ffffff_0%,transparent_50%,#000000_100%),linear-gradient(to_right,#ff0000,#ffff00_17%,#00ff00_33%,#00ffff_50%,#0000ff_67%,#ff00ff_83%,#ff0000)]" />
        </div>
        <div className="h-[5px] shrink-0" />
        <DockTab tabs={<TabHead w="w-[61px]" active>Swatches</TabHead>} />
        <div className="h-[5px] shrink-0" />
        <DockTab tabs={<><TabHead w="w-[56px]" active><Updown />Stroke</TabHead><TabHead w="w-[56px]">Gradient</TabHead></>} />
        <div className="h-[5px] shrink-0" />
        <DockTab tabs={<><TabHead w="w-[75px]" active>Asset Export</TabHead><TabHead w="w-[72px]">Appearance</TabHead></>} />
        <div className="flex-1 bg-[#535353]" />
    </div>
);

const TaskIcon = ({ children, active = false, open = false }) => (
    <div className={`relative w-[49px] h-full flex items-center justify-center shrink-0 ${active ? 'bg-[#3c3c3c]' : ''}`}>
        {children}
        {open && <div className="absolute bottom-0 left-[4px] right-[4px] h-[2px] bg-[#76dbe6]" />}
    </div>
);

const Taskbar = () => (
    <div className="h-[41px] shrink-0 flex items-center bg-[#0a0a0a] text-white">
        <div className="w-[48px] flex justify-center shrink-0"><svg width="16" height="16" viewBox="0 0 16 16" fill="#fff"><path d="M0 2.300L6.500 1.400V7.500H0zM7.300 1.300L16 0v7.500H7.300zM0 8.300h6.500v6.300L0 13.700zM7.300 8.300H16V16l-8.700-1.300z" /></svg></div>
        <div className="w-[48px] flex justify-center shrink-0"><svg width="17" height="17" viewBox="0 0 17 17" fill="none" stroke="#fff" strokeWidth="1.200"><circle cx="10.500" cy="6.500" r="5.500" /><path d="M6.500 10.500L1 16" /></svg></div>
        <div className="w-[48px] flex justify-center shrink-0"><svg width="17" height="16" viewBox="0 0 17 16" fill="none" stroke="#fff" strokeWidth="1.100"><path d="M1 1h10M1 15h10" /><rect x="1" y="4" width="10" height="8" /><rect x="13.500" y="4" width="2.500" height="2.500" fill="#fff" /><path d="M14 9v3M14 1v1M14 14v1" /></svg></div>
        <div className="ml-[2px] flex h-full">
            <TaskIcon open>
                <svg width="22" height="20" viewBox="0 0 22 20"><path d="M0 1h9l2 2h11v15H0z" fill="#f6d77c" /><path d="M0 4h22v3H0z" fill="#e2ba5a" /><path d="M7 11h8v2H7z" fill="#2a8fd8" /><path d="M8 13h6v7H8zM5 13h12v2H5z" fill="#34a4e8" /><path d="M9 15h4v3H9z" fill="#f6d77c" /></svg>
            </TaskIcon>
            <TaskIcon>
                <svg width="24" height="24" viewBox="0 0 24 24"><path d="M17 0l6 3v18l-6 3L6.500 14 2 17.500 0 16V8l2-1.500L6.500 10zM17 6.500L11 12l6 5.500z" fill="#1f8ad6" /></svg>
            </TaskIcon>
            <TaskIcon active open>
                <div className="w-[22px] h-[22px] flex items-center justify-center bg-[#2b0f00] border-2 border-[#ff7c00] text-[#ff8a1e] text-[12px] font-semibold">Ai</div>
            </TaskIcon>
            <TaskIcon>
                <div className="relative w-[24px] h-[24px]">
                    <div className="absolute inset-0 rounded-[4px] rotate-[8deg] bg-[linear-gradient(135deg,#e043a8,#7b3fe4)]" />
                    <div className="absolute left-[4px] top-[4px] w-[16px] h-[16px] bg-black text-white text-[9px] leading-[10px] font-bold pl-[2px] pt-px">PS<div className="mt-[2px] w-[6px] h-px bg-white" /></div>
                </div>
            </TaskIcon>
            <TaskIcon open>
                <svg width="22" height="22" viewBox="0 0 22 22"><circle cx="11" cy="11" r="11" fill="#dd4b3e" /><path d="M11 11L1.500 5.500A11 11 0 0 0 8 21.600z" fill="#249b49" /><path d="M11 11l-3 10.600A11 11 0 0 0 21.800 9 11 11 0 0 0 20.500 5.500H11z" fill="#f7c52d" /><circle cx="11" cy="11" r="5" fill="#fff" /><circle cx="11" cy="11" r="4" fill="#4b8bf0" /></svg>
            </TaskIcon>
            <TaskIcon open>
                <svg width="22" height="22" viewBox="0 0 22 22"><rect width="22" height="22" fill="#fff" /><path d="M1 1h20v13l-3-4-2 2-5-6-5 6-2-2-3 4z" fill="#000" /></svg>
            </TaskIcon>
        </div>
        <div className="flex-1" />
        <svg width="16" height="16" viewBox="0 0 16 16" fill="none" stroke="#e8e8e8" className="shrink-0"><circle cx="11" cy="4" r="2.800" /><circle cx="5" cy="8" r="2.800" /><path d="M1 15c0-3 2-4 4-4s4 1 4 4M10 8c2 0 5 1 5 4" /></svg>
        <svg width="13" height="8" viewBox="0 0 13 8" fill="none" stroke="#e8e8e8" strokeWidth="1.200" className="ml-[21px] shrink-0"><path d="M1 7l5.500-6L12 7" /></svg>
        <svg width="14" height="14" viewBox="0 0 14 14" fill="none" stroke="#8a8a8a" className="ml-[11px] shrink-0"><path d="M1 13A12 12 0 0 1 13 1M4 13a9 9 0 0 1 9-9M7 13a6 6 0 0 1 6-6" /><circle cx="12" cy="12" r="1.500" fill="#fff" stroke="none" /></svg>
        <svg width="17" height="11" viewBox="0 0 17 11" fill="#e4e4e4" className="ml-[8px] shrink-0"><path d="M3 11a3 3 0 0 1 0-6c1-4 8-6 10-1a3.500 3.500 0 0 1 1 7z" /></svg>
        <svg width="16" height="11" viewBox="0 0 16 11" className="ml-[8px] shrink-0"><path d="M0 3h5M2 0v3M3.500 0v3M2.700 5v3" stroke="#fff" fill="none" /><rect x="5" y="2" width="10" height="8" fill="#e8e8e8" /></svg>
        <svg width="17" height="14" viewBox="0 0 17 14" fill="none" stroke="#e8e8e8" className="ml-[7px] shrink-0"><path d="M1 5h3l4-4v12L4 9H1zM11 4c1 2 1 4 0 6M14 2c2 3 2 7 0 10" /></svg>
        <div className="ml-[2px] w-[68px] text-[12px] leading-[16px] text-center text-[#e8e8e8] shrink-0"><div>4:00 PM</div><div>11/7/2019</div></div>
        <svg width="16" height="15" viewBox="0 0 16 15" fill="none" stroke="#f0f0f0" className="ml-[10px] mr-[25px] shrink-0"><path d="M.5.500h15v11H10l-2 2.500-2-2.500H.5z" /></svg>
    </div>
);

export default function App() {
    return (
        <div className="w-[1366px] h-[768px] flex flex-col overflow-hidden bg-[#f0f0f0] font-['Roboto',sans-serif]">
            <div className="h-[727px] flex shrink-0">
                <div className="w-[1360px] shrink-0 flex flex-col bg-[#535353]">
                    <MenuBar />
                    <ControlBar />
                    <div className="relative flex-1 flex min-h-0">
                        <ToolBar />
                        <div className="w-[1043px] shrink-0 flex flex-col bg-[#424242] pl-px pr-[2px]">
                            <div className="h-[29px] shrink-0 flex bg-[#424242] border-b border-[#3a3a3a]">
                                <div className="w-[246px] flex items-center pl-[9px] pt-[2px] bg-[#535353] border-r border-[#3a3a3a] text-[11px] font-semibold text-[#e8e8e8] font-['Noto_Sans',sans-serif]">
                                    <span>banner.ai @ 33.33% (RGB/GPU Preview)</span>
                                    <svg width="8" height="8" viewBox="0 0 8 8" stroke="#e8e8e8" strokeWidth="2" className="ml-[13px]"><path d="M1 1l6 6M7 1L1 7" /></svg>
                                </div>
                            </div>
                            <div className="flex-1 flex min-h-0">
                                <Canvas />
                                <div className="w-[15px] shrink-0 flex flex-col justify-end items-center pb-[5px] bg-[#5a5a5a]">
                                    <Chev dim />
                                </div>
                            </div>
                            <StatusBar />
                            <div className="h-px shrink-0" />
                        </div>
                        <Dock />
                        <FloatingPanels />
                    </div>
                </div>
                <div className="w-[6px] shrink-0 flex flex-col">
                    <div className="h-[34px] bg-[#b3c3cf]" />
                    <div className="h-[36px] bg-[#444]" />
                    <div className="relative flex-1 bg-[#f0f0f0]">
                        <div className="absolute left-px top-[63px] w-[3px] h-[17px] bg-[#a8a8a8]" />
                    </div>
                </div>
            </div>
            <Taskbar />
        </div>
    );
}
